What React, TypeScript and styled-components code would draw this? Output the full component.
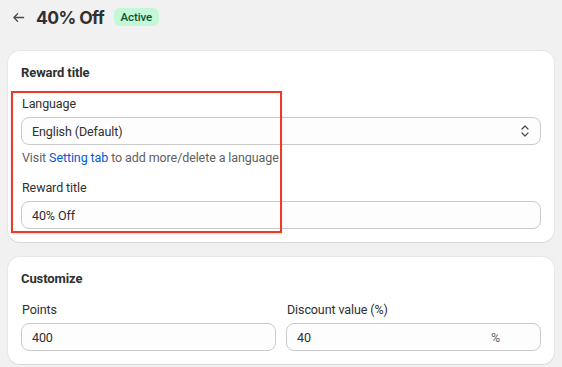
import React from "react";
import { createGlobalStyle, styled } from "styled-components";

const GlobalStyle = createGlobalStyle`
  body {
    margin: 0;
    background-color: #f1f1f1;
    font-family: Roboto, Inter, "Noto Sans", sans-serif;
    color: #303030;
    font-size: 12.5px;
    letter-spacing: -0.1px;
  }
`;

const Page = styled.div`
  width: 562px;
  height: 367px;
  overflow: hidden;
  padding: 0 8px;
  box-sizing: border-box;
`;

const Header = styled.div`
  height: 34px;
  display: flex;
  align-items: center;
  gap: 8px;
  padding-left: 4px;
  margin-bottom: 17px;
`;

const BackButton = styled.button`
  border: none;
  background: none;
  padding: 0;
  margin-right: 3px;
  width: 13px;
  height: 16px;
  display: flex;
  align-items: center;
  justify-content: center;
  color: #4a4a4a;
  cursor: pointer;
`;

const Title = styled.h1`
  margin: 0;
  font-family: Inter, Roboto, sans-serif;
  font-size: 17.5px;
  font-weight: 700;
  letter-spacing: -0.6px;
  color: #303030;
`;

const Badge = styled.span`
  margin-left: 2px;
  background-color: #c4f7d7;
  color: #0c5132;
  font-size: 11.5px;
  font-weight: 500;
  border-radius: 6px;
  padding: 1px 6.5px;
  line-height: 16px;
`;

const Card = styled.section`
  position: relative;
  background-color: #fff;
  border-radius: 12px;
  box-shadow: 0 1px 0 rgba(26, 26, 26, 0.07), 0 0 0 1px rgba(0, 0, 0, 0.04);
  padding: 12px 13px 13px;
  margin-bottom: 15px;
  display: flex;
  flex-direction: column;
`;

const CardTitle = styled.h2`
  margin: 0 0 11px;
  font-size: 13px;
  font-weight: 700;
  line-height: 20px;
`;

const Label = styled.label`
  display: block;
  line-height: 20px;
  margin-bottom: 3px;
  padding-left: 1px;
`;

const Field = styled.div`
  display: flex;
  flex-direction: column;
`;

const InputBox = styled.div`
  height: 28px;
  box-sizing: border-box;
  border: 1px solid #cacaca;
  border-radius: 8px;
  background-color: #fdfdfd;
  display: flex;
  align-items: center;
  padding: 0 10px;
  justify-content: space-between;
`;

const Value = styled.span`
  color: #303030;
`;

const Suffix = styled.span`
  color: #616161;
  padding-right: 30px;
`;

const HelpText = styled.p`
  margin: 3px 0 10px;
  line-height: 20px;
  color: #616161;
  padding-left: 1px;
`;

const Link = styled.a`
  color: #005bd3;
  text-decoration: none;
`;

const Row = styled.div`
  display: grid;
  grid-template-columns: 1fr 1fr;
  gap: 10px;
`;

const Highlight = styled.div`
  position: absolute;
  left: 3px;
  top: 40px;
  width: 271px;
  height: 142px;
  box-sizing: border-box;
  border: 2px solid #ee3a24;
  pointer-events: none;
  box-shadow: 0 1px 2px rgba(0, 0, 0, 0.15);
`;

function ArrowLeft() {
  return (
    <svg width="13" height="13" viewBox="0 0 14 14" fill="none">
      <path
        d="M12.5 7H2M6 3L2 7l4 4"
        stroke="currentColor"
        strokeWidth="1.4"
        strokeLinecap="round"
        strokeLinejoin="round"
      />
    </svg>
  );
}

function SelectChevron() {
  return (
    <svg width="10" height="14" viewBox="0 0 10 14" fill="none">
      <path
        d="M2 5l3-3 3 3M2 9l3 3 3-3"
        stroke="#4a4a4a"
        strokeWidth="1.2"
        strokeLinecap="round"
        strokeLinejoin="round"
      />
    </svg>
  );
}

function App() {
  return (
    <Page>
      <GlobalStyle />
      <Header>
        <BackButton aria-label="Back">
          <ArrowLeft />
        </BackButton>
        <Title>40% Off</Title>
        <Badge>Active</Badge>
      </Header>

      <Card>
        <CardTitle>Reward title</CardTitle>
        <Field>
          <Label>Language</Label>
          <InputBox>
            <Value>English (Default)</Value>
            <SelectChevron />
          </InputBox>
        </Field>
        <HelpText>
          Visit <Link href="#">Setting tab</Link> to add more/delete a language
        </HelpText>
        <Field>
          <Label>Reward title</Label>
          <InputBox>
            <Value>40% Off</Value>
          </InputBox>
        </Field>
        <Highlight />
      </Card>

      <Card>
        <CardTitle>Customize</CardTitle>
        <Row>
          <Field>
            <Label>Points</Label>
            <InputBox>
              <Value>400</Value>
            </InputBox>
          </Field>
          <Field>
            <Label>Discount value (%)</Label>
            <InputBox>
              <Value>40</Value>
              <Suffix>%</Suffix>
            </InputBox>
          </Field>
        </Row>
      </Card>
    </Page>
  );
}

export default App;
